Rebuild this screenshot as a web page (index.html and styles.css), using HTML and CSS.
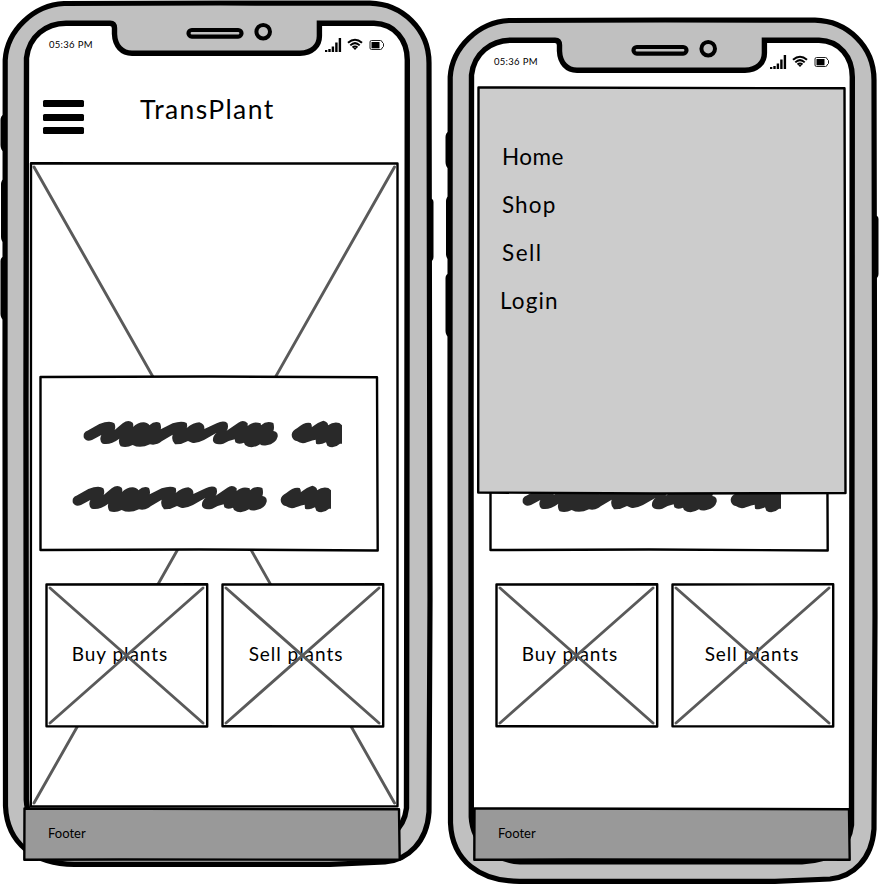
FILE: index.html
```html
<!DOCTYPE html>
<html lang="en">
<head>
<meta charset="utf-8">
<title>TransPlant wireframes</title>
<link rel="stylesheet" href="styles.css">
</head>
<body>
<svg class="defs" width="0" height="0" aria-hidden="true">
  <symbol id="phone" viewBox="0 0 436 868">
    <path fill="#000" d="M4 114 Q0.500 116 0.500 120 V145 Q0.500 150 4 152Z M5 178 Q1 180 1 184 V237 Q1 242 5 243Z M5 256 Q0.500 257 0.500 261 V314 Q0.500 319 5 321Z M428 198 Q433.500 198 433.500 202 V257 Q433.500 262 428 262Z"/>
    <path fill="#c0c0c0" stroke="#000" stroke-width="5.200" d="M64 3.500 L220 3 L370 3.200 C402 4 429 29 429 63 L430 600 L429 812 C427 842 408 860 385 862 L330 864.300 H75 C35 864.500 7 844 5.500 806 L5 400 L5.200 60 C7 30 34 5 64 3.500Z"/>
    <path fill="#fff" stroke="#000" stroke-width="5.400" d="M66 23.200 H110 Q114.500 23.400 114.500 28 V34 C115 46 122 53.200 132 53.200 H300 C312 53 319.400 46 319.400 36 V23.300 H374 C395 24 407.300 40 407.300 60 L407 400 L406.500 808 C404 830 388 843.500 357 844.800 H75 C50 843 28 828 26.300 800 L26 400 L26.500 58 C29 36 46 23.500 66 23.200Z"/>
    <rect x="188.500" y="30" width="53" height="6.600" rx="3.300" fill="#c0c0c0" stroke="#000" stroke-width="4.200"/>
    <ellipse cx="263.200" cy="31.700" rx="6.800" ry="6.800" fill="#c0c0c0" stroke="#000" stroke-width="4"/>
  </symbol>
  <symbol id="signals" viewBox="0 0 60 15">
    <path d="M0 12h2.300v2H0z M3.300 11h2.400v3h-2.400z M6.700 8.500h2.400V14H6.700z M10.200 4.500h2.400V14h-2.400z M13.700 0h2.400v14h-2.400z"/>
    <path fill="none" stroke="#000" stroke-width="2" d="M23 4.800 Q30 -1.400 37 4.800 M25.300 7.400 Q30 2.900 34.700 7.400 M27.500 9.600 Q30 7.400 32.500 9.600"/>
    <path d="M28.300 10.300 Q30 9 31.700 10.300 L30 12z"/>
    <path fill="none" stroke="#222" stroke-width="1" d="M46.500 2.500 H55.500 Q57 2.500 57 4 L58.500 5.500 V8.500 L57 10 Q57 11.500 55.500 11.500 H46.500 Q45 11.500 45 10 V4 Q45 2.500 46.500 2.500Z"/>
    <path d="M46.500 4h8v6.300h-8z"/>
  </symbol>
  <symbol id="scribble" viewBox="69 60 777 84">
    <path fill="#292929" d="M71 107 Q70 97 82 92 L118 72 Q150 60 163 70 Q168 80 164 90 L188 70 Q205 57 218 68 Q222 76 218 82 Q235 66 252 67 Q266 70 268 76 Q285 60 300 69 Q305 80 302 88 L338 70 Q365 61 380 69 Q383 78 380 84 Q400 68 418 67 Q435 72 433 87 L470 70 Q490 60 502 69 Q507 82 500 92 L535 68 Q550 57 563 70 V78 Q580 62 602 70 L603 76 Q620 60 640 69 Q644 82 640 93 Q655 95 653 110 Q648 130 620 136 Q605 138 600 133 Q575 149 555 135 L552 128 Q535 135 526 127 L524 118 Q505 122 490 131 Q465 137 459 123 Q457 108 470 98 L432 120 Q410 131 396 128 L384 123 Q365 134 345 133 Q333 122 338 104 L305 124 Q290 137 270 133 Q240 147 218 135 Q200 145 182 139 Q174 128 178 116 Q150 137 128 131 Q116 122 124 105 L96 120 Q78 127 71 112Z"/>
    <path fill="#292929" d="M695 104 Q696 92 712 84 Q735 64 752 69 Q757 77 755 82 Q775 66 790 62 Q805 66 804 76 Q820 64 838 69 L846 76 V131 H840 Q820 149 802 137 L798 127 Q780 136 768 131 L767 119 Q745 124 735 129 Q720 131 712 124 Q695 120 695 104Z"/>
  </symbol>
</svg>

<main class="board">
  <article class="phone phone-home">
    <svg class="case"><use href="#phone"/></svg>
    <div class="status"><span>05:36 PM</span><svg class="signals"><use href="#signals"/></svg></div>
    <header class="topbar">
      <div class="burger"><i></i><i></i><i></i></div>
      <h1>TransPlant</h1>
    </header>
    <section class="stage">
      <svg class="sketch" viewBox="0 0 369 645"><path class="cross" d="M4 5 L364.500 641 M364.500 5 L4 641"/><path class="edge" d="M1 1.200 L250 1.500 L367.500 1.500 L367.500 644.300 L100 644.500 L0.800 644.200Z"/></svg>
      <div class="panel">
        <svg class="sketch" viewBox="0 0 340 176"><path class="edge solid" d="M1.500 2 L170 1.500 L338 2.200 L338.700 175.500 L160 174.500 L1.500 175Z"/></svg>
        <svg class="scribble first"><use href="#scribble"/></svg>
        <svg class="scribble"><use href="#scribble"/></svg>
      </div>
      <div class="cards">
        <div class="card"><svg class="sketch" viewBox="0 0 164 145"><path class="edge solid" d="M1.500 1.500 L162.200 1.300 L162.200 143.500 L1.500 143.200Z"/></svg><span class="buy">Buy plants</span><svg class="sketch" viewBox="0 0 164 145"><path class="cross" d="M5 5 L158 140 M158 5 L5 140"/></svg></div>
        <div class="card"><svg class="sketch" viewBox="0 0 164 145"><path class="edge solid" d="M1.500 1.500 L162.200 1.300 L162.200 143.500 L1.500 143.200Z"/></svg><span class="sell">Sell plants</span><svg class="sketch" viewBox="0 0 164 145"><path class="cross" d="M5 5 L158 140 M158 5 L5 140"/></svg></div>
      </div>
    </section>
    <footer class="footer"><svg class="sketch" viewBox="0 0 378 54"><path class="edge grey" d="M1.500 1.500 L376 2.200 L376.700 52.700 L100 52.500 L1.300 52.800Z"/></svg><span>Footer</span></footer>
  </article>

  <article class="phone phone-menu">
    <svg class="case"><use href="#phone"/></svg>
    <div class="status"><span>05:36 PM</span><svg class="signals"><use href="#signals"/></svg></div>
    <section class="stage">
      <div class="panel">
        <svg class="sketch" viewBox="0 0 340 176"><path class="edge solid" d="M1.500 2 L170 1.500 L338 2.200 L338.700 175.500 L160 174.500 L1.500 175Z"/></svg>
        <svg class="scribble first"><use href="#scribble"/></svg>
        <svg class="scribble"><use href="#scribble"/></svg>
      </div>
      <div class="cards">
        <div class="card"><svg class="sketch" viewBox="0 0 164 145"><path class="edge solid" d="M1.500 1.500 L162.200 1.300 L162.200 143.500 L1.500 143.200Z"/></svg><span class="buy">Buy plants</span><svg class="sketch" viewBox="0 0 164 145"><path class="cross" d="M5 5 L158 140 M158 5 L5 140"/></svg></div>
        <div class="card"><svg class="sketch" viewBox="0 0 164 145"><path class="edge solid" d="M1.500 1.500 L162.200 1.300 L162.200 143.500 L1.500 143.200Z"/></svg><span class="sell wide">Sell plants</span><svg class="sketch" viewBox="0 0 164 145"><path class="cross" d="M5 5 L158 140 M158 5 L5 140"/></svg></div>
      </div>
    </section>
    <footer class="footer"><svg class="sketch" viewBox="0 0 378 54"><path class="edge grey" d="M1.500 1.500 L376 2.200 L376.700 52.700 L100 52.500 L1.300 52.800Z"/></svg><span>Footer</span></footer>
    <nav class="menu">
      <svg class="sketch" viewBox="0 0 370 409"><path class="edge pale" d="M1.500 1.500 L367.500 2.300 L368.500 407 L180 407.500 L1.200 406.500Z"/></svg>
      <a class="m-home">Home</a><a class="m-shop">Shop</a><a class="m-sell">Sell</a><a class="m-login">Login</a>
    </nav>
  </article>
</main>
</body>
</html>
```
FILE: styles.css
```css
* { box-sizing: border-box; }
body { margin: 0; background: #fff; color: #000; font-family: Lato, "Liberation Sans", sans-serif; overflow: hidden; }
svg { display: block; }
.defs { position: absolute; }
.board { display: grid; grid-template-columns: 445px 434px; height: 884px; }
.phone { position: relative; display: flex; flex-direction: column; }
.phone-menu { padding-top: 17px; }
.case { position: absolute; left: 0; top: 0; width: 436px; height: 868px; overflow: visible; }
.phone-menu .case { top: 17px; }

.status { position: relative; height: 80px; padding: 38px 50px 0 49px; display: flex; justify-content: space-between; width: 435px; }
.status span { font-size: 9.5px; line-height: 13px; letter-spacing: 0.3px; white-space: nowrap; }
.signals { width: 60px; height: 15px; }

.topbar { position: relative; height: 82px; padding-left: 42.5px; display: flex; align-items: flex-start; }
.burger { width: 41px; padding-top: 20px; display: grid; gap: 6.5px; }
.burger i { height: 7px; background: #000; border-radius: 1.5px; }
h1 { margin: 12px 0 0 56.5px; font-size: 26.5px; line-height: 34px; font-weight: 400; letter-spacing: 1.4px; }

.stage { position: relative; margin-left: 30px; width: 369px; height: 645px; padding: 213px 0 0 9px; }
.phone-menu .stage { margin: 65px 0 0 35px; }
.sketch { position: absolute; left: 0; top: 0; width: 100%; height: 100%; overflow: visible; }
.edge { fill: none; stroke: #000; stroke-width: 2.4; stroke-linejoin: round; }
.solid { fill: #fff; }
.grey { fill: #999; }
.pale { fill: #ccc; }
.cross { fill: none; stroke: #5a5a5a; stroke-width: 2.9; stroke-linecap: round; }

.panel { position: relative; width: 340px; height: 176px; padding: 45px 0 0 33px; }
.scribble { position: relative; width: 259px; height: 28px; }
.scribble.first { margin: 0 0 37px 11px; }

.cards { display: flex; gap: 12px; margin: 32px 0 0 6px; }
.card { position: relative; width: 164px; height: 145px; display: flex; justify-content: center; padding: 59px 12px 0 0; }
.card span { position: relative; font-size: 19px; line-height: 24px; white-space: nowrap; letter-spacing: 0.95px; }
.card .buy { left: -1px; }
.card .sell { left: -1px; }
.card .wide { left: 5px; }

.footer { position: relative; margin-left: 23px; width: 378px; height: 54px; padding: 17px 0 0 25px; }
.phone-menu .footer { margin-left: 28px; }
.footer span { position: relative; display: block; font-size: 13px; line-height: 18px; }

.menu { position: absolute; left: 32px; top: 86px; width: 370px; height: 409px; padding: 47px 0 0 25px; display: flex; flex-direction: column; align-items: flex-start; }
.menu a { position: relative; font-size: 22.5px; line-height: 48px; }
.menu .m-home { letter-spacing: 0.5px; }
.menu .m-shop { letter-spacing: 1.1px; }
.menu .m-sell { letter-spacing: 1.5px; }
.menu .m-login { margin-left: -2px; letter-spacing: 1.1px; }
```
